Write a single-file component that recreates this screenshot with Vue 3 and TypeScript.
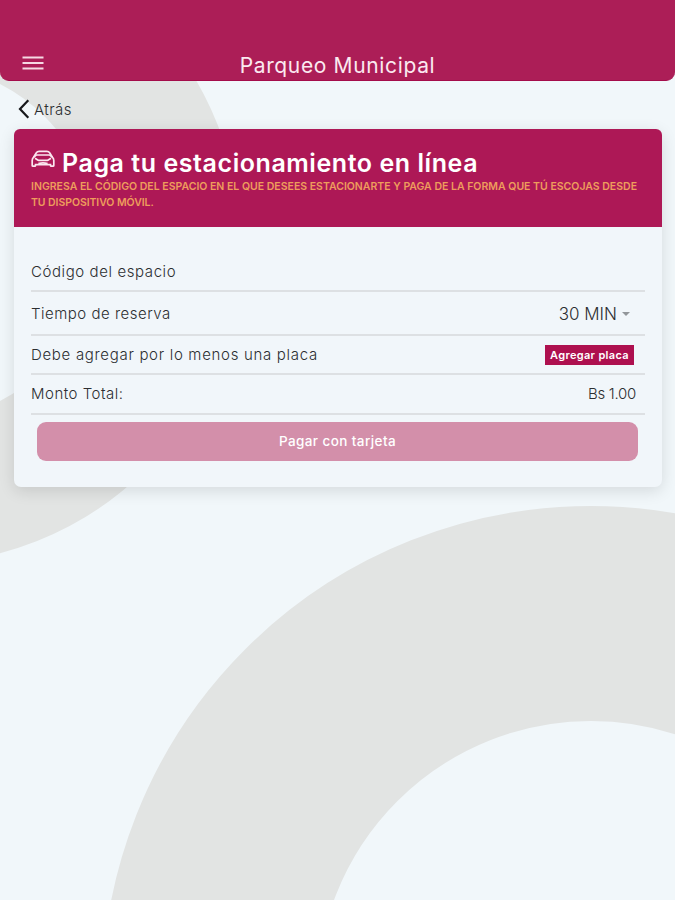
<script setup lang="ts">
import { ref } from 'vue'

const duration = ref('30 MIN')
const total = ref(1)
</script>

<template>
  <div class="screen">
    <svg class="backdrop" viewBox="0 0 675 900" aria-hidden="true">
      <circle cx="-81" cy="242.5" r="249.5" stroke-width="143" />
      <circle cx="591" cy="995" r="381.5" stroke-width="215" />
    </svg>

    <header class="topbar">
      <svg class="menu" viewBox="0 0 22 14">
        <path d="M0.5 1.5H21.5M0.5 7H21.5M0.5 12.5H21.5" />
      </svg>
      <h1 class="title">Parqueo Municipal</h1>
    </header>

    <nav class="back">
      <svg class="chevron" viewBox="0 0 12 20">
        <path d="M10.3 1.3L2 10L10.3 18.7" />
      </svg>
      <span>Atrás</span>
    </nav>

    <main class="card">
      <section class="banner">
        <div class="heading">
          <svg class="car" viewBox="0 0 24 18">
            <path d="M2.6 7.2L5.2 3Q6.2 1.4 8.2 1.4H15.8Q17.8 1.4 18.8 3L21.4 7.2" />
            <path d="M5.2 5H18.8L21.3 7.2Q22.8 8.6 22.8 10.5V15.4Q22.8 16.2 22 16.2H20.2Q19.5 16.2 19.5 15.5V14.7H4.5V15.5Q4.5 16.2 3.8 16.2H2Q1.2 16.2 1.2 15.4V10.5Q1.2 8.6 2.7 7.2Z" />
            <path d="M4 8.2L7.2 10.2M20 8.2L16.8 10.2M7.2 10.4H16.8M7.4 13.6Q12 12 16.6 13.6" />
          </svg>
          <h2>Paga tu estacionamiento en línea</h2>
        </div>
        <p class="lead">
          <span class="line-one">INGRESA EL CÓDIGO DEL ESPACIO EN EL QUE DESEES ESTACIONARTE Y PAGA DE LA FORMA QUE TÚ ESCOJAS DESDE</span>
          <span class="line-two">TU DISPOSITIVO MÓVIL.</span>
        </p>
      </section>

      <section class="form">
        <div class="row code"><span class="label-code">Código del espacio</span></div>
        <div class="row time">
          <span class="label-time">Tiempo de reserva</span>
          <span class="select">{{ duration }}<i class="caret"></i></span>
        </div>
        <div class="row plate">
          <span class="label-plate">Debe agregar por lo menos una placa</span>
          <button class="add">Agregar placa</button>
        </div>
        <div class="row amount">
          <span class="label-amount">Monto Total:</span>
          <span class="sum">Bs {{ total.toFixed(2) }}</span>
        </div>
        <button class="pay" disabled>Pagar con tarjeta</button>
      </section>
    </main>
  </div>
</template>

<style>
body {
  background: #f1f7fa;
}
</style>

<style scoped>
.screen {
  position: relative;
  height: 900px;
  overflow: hidden;
  background: #f1f7fa;
  color: #2c2e31;
  font-family: Inter, 'Open Sans', sans-serif;
  font-weight: 300;
}

.backdrop {
  position: absolute;
  inset: 0;
  width: 675px;
  height: 900px;
}

.backdrop circle {
  fill: none;
  stroke: #e2e4e3;
}

.topbar {
  position: relative;
  box-sizing: border-box;
  display: grid;
  grid-template-columns: 22px 1fr 22px;
  align-items: end;
  height: 81px;
  padding: 0 22px;
  background: #ac1e57;
  border-bottom: 1px solid #a40c4a;
  border-radius: 0 0 9px 9px;
}

.menu {
  width: 22px;
  height: 14px;
  margin-bottom: 10px;
}

.menu path {
  stroke: #f6d9e4;
  stroke-width: 2;
}

.title {
  margin: 0;
  color: #fbe9f0;
  font-size: 21px;
  font-weight: 400;
  line-height: 28px;
  letter-spacing: 0.65px;
  text-align: center;
}

.back {
  position: relative;
  display: flex;
  align-items: center;
  gap: 4px;
  height: 48px;
  box-sizing: border-box;
  padding: 8px 0 0 18px;
  font-size: 15px;
  letter-spacing: 0.45px;
}

.chevron {
  width: 12px;
  height: 20px;
}

.chevron path {
  fill: none;
  stroke: #17191c;
  stroke-width: 2.2;
}

.card {
  position: relative;
  box-sizing: border-box;
  width: 648px;
  height: 358px;
  margin-left: 14px;
  background: #f1f6fa;
  border-radius: 7px;
  box-shadow: 0 4px 16px rgba(0, 0, 0, 0.12);
}

.banner {
  box-sizing: border-box;
  height: 98px;
  padding: 17px 17px 0;
  background: #ad1856;
  border-radius: 6px 6px 0 0;
}

.heading {
  display: flex;
  align-items: flex-start;
  gap: 7px;
  height: 32px;
}

.car {
  width: 24px;
  height: 18px;
  margin-top: 4px;
}

.car path {
  fill: none;
  stroke: #fbe6ef;
  stroke-width: 1.7;
}

h2 {
  margin: 0;
  color: #fff;
  font-size: 25px;
  font-weight: 600;
  line-height: 34px;
  letter-spacing: 0.56px;
  white-space: nowrap;
}

.lead {
  display: flex;
  flex-direction: column;
  margin: 0;
  padding-top: 1px;
  color: #ee9d5c;
  font-size: 10.5px;
  font-weight: 600;
  line-height: 16px;
  white-space: nowrap;
}

.line-two {
  letter-spacing: -0.07px;
}

.form {
  padding: 24px 17px 0;
}

.row {
  box-sizing: border-box;
  display: flex;
  align-items: center;
  justify-content: space-between;
  border-bottom: 2px solid #dde0e3;
  font-size: 15px;
  white-space: nowrap;
}

.code {
  height: 41px;
  padding-top: 1px;
}

.time {
  height: 44px;
  padding-right: 15px;
}

.plate {
  height: 39px;
  padding-right: 11px;
}

.amount {
  height: 40px;
  padding: 0 9px 2px 0;
}

.label-code {
  letter-spacing: 0.59px;
}

.label-time {
  letter-spacing: 0.5px;
}

.label-plate {
  letter-spacing: 0.69px;
}

.label-amount {
  letter-spacing: 0.5px;
}

.sum {
  letter-spacing: -0.28px;
}

.select {
  display: flex;
  align-items: center;
  gap: 5px;
  padding-top: 1px;
  font-size: 17px;
}

.caret {
  border: 4px solid transparent;
  border-top-color: #92969a;
  border-bottom: 0;
}

.add,
.pay {
  border: 0;
  padding: 0;
  font-family: inherit;
  white-space: nowrap;
}

.add {
  width: 89px;
  height: 20px;
  background: #ae104f;
  color: #fff;
  font-size: 11px;
  font-weight: 600;
  letter-spacing: 0.33px;
}

.pay {
  display: block;
  width: 601px;
  height: 39px;
  margin: 7px 0 0 6px;
  padding-bottom: 1px;
  background: #d38faa;
  border-radius: 9px;
  color: #fff;
  font-size: 13.5px;
  font-weight: 500;
  letter-spacing: 0.41px;
}
</style>
